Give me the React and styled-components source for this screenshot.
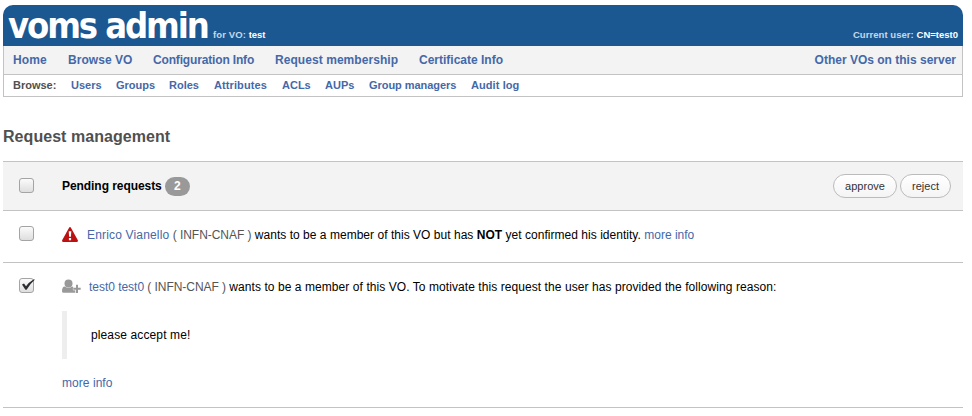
import React from "react";
import styled, { createGlobalStyle } from "styled-components";

const Global = createGlobalStyle`
  * { box-sizing: border-box; }
  body { margin: 0; background: #fff; color: #000; font: 12px/16px "Liberation Sans", Arial, sans-serif; }
  a { color: #4468a8; text-decoration: none; }
`;
const Page = styled.div`width: 960px; margin: 5px 0 0 3px;`;
const Header = styled.header`
  height: 41px; background: #1b5891; border-radius: 10px 10px 0 0; color: #fff;
  display: flex; align-items: baseline; padding: 0 5px 0 5px; white-space: nowrap;
`;
const Title = styled.h1`
  margin: 0; font: bold 36px/42px "DejaVu Sans Condensed", "DejaVu Sans", sans-serif;
  font-stretch: condensed; letter-spacing: -2.1px; width: 205px;
`;
const Meta = styled.div`
  font-size: 9.5px; font-weight: bold; color: #c5d8ea; letter-spacing: ${(p) => p.$ls || 0}px;
  margin-left: ${(p) => (p.$right ? "auto" : 0)};
  b { color: #fff; letter-spacing: 0; }
`;
const Nav = styled.nav`
  height: 29px; background: #f3f3f3; border: 1px solid #c3c3c3; border-top: 0;
  display: flex; align-items: center; padding: 0 6px 0 9px; font-weight: bold; white-space: nowrap;
  a:last-child { margin-left: auto; }
`;
const SubNav = styled.nav`
  height: 22px; border: 1px solid #c3c3c3; border-top: 0; display: flex; align-items: center;
  padding: 0 0 2px 9px; font-size: 11px; font-weight: bold; color: #505050; white-space: nowrap;
`;
const NavLink = styled.a`
  width: ${(p) => (p.$w ? `${p.$w}px` : "auto")}; letter-spacing: ${(p) => p.$ls}px;
`;
const SubLabel = styled.span`width: 58px;`;
const Heading = styled.h2`margin: 30px 0 14px; font-size: 16px; line-height: 20px; color: #505050; letter-spacing: 0.05px;`;
const Requests = styled.section`border-top: 1px solid #c3c3c3;`;
const Row = styled.div`
  display: flex; height: ${(p) => p.$h}px; border-bottom: 1px solid #c3c3c3;
  background: ${(p) => (p.$head ? "#f3f3f3" : "#fff")}; padding: 16px 12px 0 16px;
`;
const Check = styled.label`
  width: 15px; height: 15px; margin: ${(p) => (p.$raised ? -1 : 0)}px 28px 0 0; flex: none; border: 1px solid #a4a4a4; border-radius: 3px;
  background: linear-gradient(#fbfbfb, #dedede);
  svg { display: block; overflow: visible; }
`;
const Body = styled.div`flex: 1; white-space: nowrap;`;
const Line = styled.div`display: flex; align-items: center; height: 16px; white-space: pre;`;
const IconBox = styled.span`display: block; width: ${(p) => p.$w}px; height: 16px; svg { display: block; }`;
const Name = styled.a`letter-spacing: ${(p) => p.$ls}px;`;
const Org = styled.span`color: #555; letter-spacing: ${(p) => p.$ls}px;`;
const Text = styled.span`letter-spacing: ${(p) => p.$ls}px;`;
const Badge = styled.span`
  width: 25px; height: 19px; margin-left: 3px; border-radius: 9.5px; background: #999; color: #fff;
  font-weight: bold; line-height: 18px; text-align: center;
`;
const Strong = styled.b`letter-spacing: -0.06px;`;
const Actions = styled.div`display: flex; gap: 3px; margin-top: -4px;`;
const Button = styled.button`
  width: ${(p) => p.$w}px; height: 24px; border: 1px solid #bbb; border-radius: 12px; padding: 0;
  background: linear-gradient(#fff, #f4f4f4); color: #333; font: 11px "Liberation Sans", Arial, sans-serif;
`;
const Quote = styled.blockquote`
  margin: 16px 0; height: 48px; border-left: 5px solid #eee; padding: 16px 0 0 24px; letter-spacing: 0.12px;
`;

const Tick = () => (
  <svg width="13" height="13" viewBox="0 0 13 13"><path d="M2 5.6 4 4.4 6 7.2Q9 3 13.4.4L15 .6Q10 5 6.6 10.8H5.4Z" fill="#2b2e30" /></svg>
);
const Warning = () => (
  <svg width="16" height="16" viewBox="0 0 16 16">
    <path d="M7.2.5Q8-.4 8.8.5L16 13.6Q16 15 15 15H1Q0 15 0 13.6Z" fill="#bd1010" />
    <path d="M6.7 4.3h2.6L8.9 9.8H7.1ZM6.9 11h2.2v2.2H6.9Z" fill="#fff" />
  </svg>
);
const UserPlus = () => (
  <svg width="19" height="16" viewBox="0 0 19 16" fill="#999">
    <circle cx="6.5" cy="4.5" r="4" />
    <path d="M0 12.2Q0 7.6 2.8 7.4q3.7 2.9 7.4 0 .6 0 1 .5v3.4h2.2v2.5H1.6Q0 13.8 0 12.2Z" />
    <path d="M14 5.7h2v3.1h2.7v2H16V14h-2v-3.2h-2.7v-2H14Z" stroke="#fff" strokeWidth=".5" paintOrder="stroke" />
  </svg>
);

const navItems = [
  ["Home", 55, 0.1], ["Browse VO", 85, 0.05], ["Configuration Info", 122, -0.16],
  ["Request membership", 144, 0.06], ["Certificate Info", 0, 0], ["Other VOs on this server", 0, 0],
];
const browseItems = [
  ["Users", 45, 0], ["Groups", 53, 0], ["Roles", 45, 0], ["Attributes", 68, 0.1],
  ["ACLs", 43, 0], ["AUPs", 44, 0], ["Group managers", 102, -0.05], ["Audit log", 0, 0.08],
];

export default function App() {
  return (
    <>
      <Global />
      <Page>
        <Header>
          <Title>voms admin</Title>
          <Meta $ls={0.1}>for VO: <b>test</b></Meta>
          <Meta $right $ls={0.06}>Current user: <b>CN=test0</b></Meta>
        </Header>
        <Nav>{navItems.map(([t, w, ls]) => <NavLink key={t} href="#" $w={w} $ls={ls}>{t}</NavLink>)}</Nav>
        <SubNav>
          <SubLabel>Browse:</SubLabel>
          {browseItems.map(([t, w, ls]) => <NavLink key={t} href="#" $w={w} $ls={ls}>{t}</NavLink>)}
        </SubNav>
        <Heading>Request management</Heading>
        <Requests>
          <Row $head $h={49}>
            <Check />
            <Body><Line><Strong>Pending requests</Strong><Badge>2</Badge></Line></Body>
            <Actions><Button $w={64}>approve</Button><Button $w={51}>reject</Button></Actions>
          </Row>
          <Row $h={52}>
            <Check $raised />
            <Body>
              <Line>
                <IconBox $w={25}><Warning /></IconBox>
                <Name href="#" $ls={0.17}>Enrico Vianello</Name><Org $ls={-0.04}> ( INFN-CNAF ) </Org>
                <Text $ls={0.03}>wants to be a member of this VO but has <b>NOT</b> yet confirmed his identity. </Text>
                <a href="#">more info</a>
              </Line>
            </Body>
          </Row>
          <Row $h={145}>
            <Check $raised><Tick /></Check>
            <Body>
              <Line>
                <IconBox $w={27}><UserPlus /></IconBox>
                <Name href="#" $ls={-0.03}>test0 test0</Name><Org $ls={-0.05}> ( INFN-CNAF ) </Org>
                <Text $ls={0.07}>wants to be a member of this VO. To motivate this request the user has provided the following reason:</Text>
              </Line>
              <Quote>please accept me!</Quote>
              <Name href="#" $ls={0.05}>more info</Name>
            </Body>
          </Row>
        </Requests>
      </Page>
    </>
  );
}
